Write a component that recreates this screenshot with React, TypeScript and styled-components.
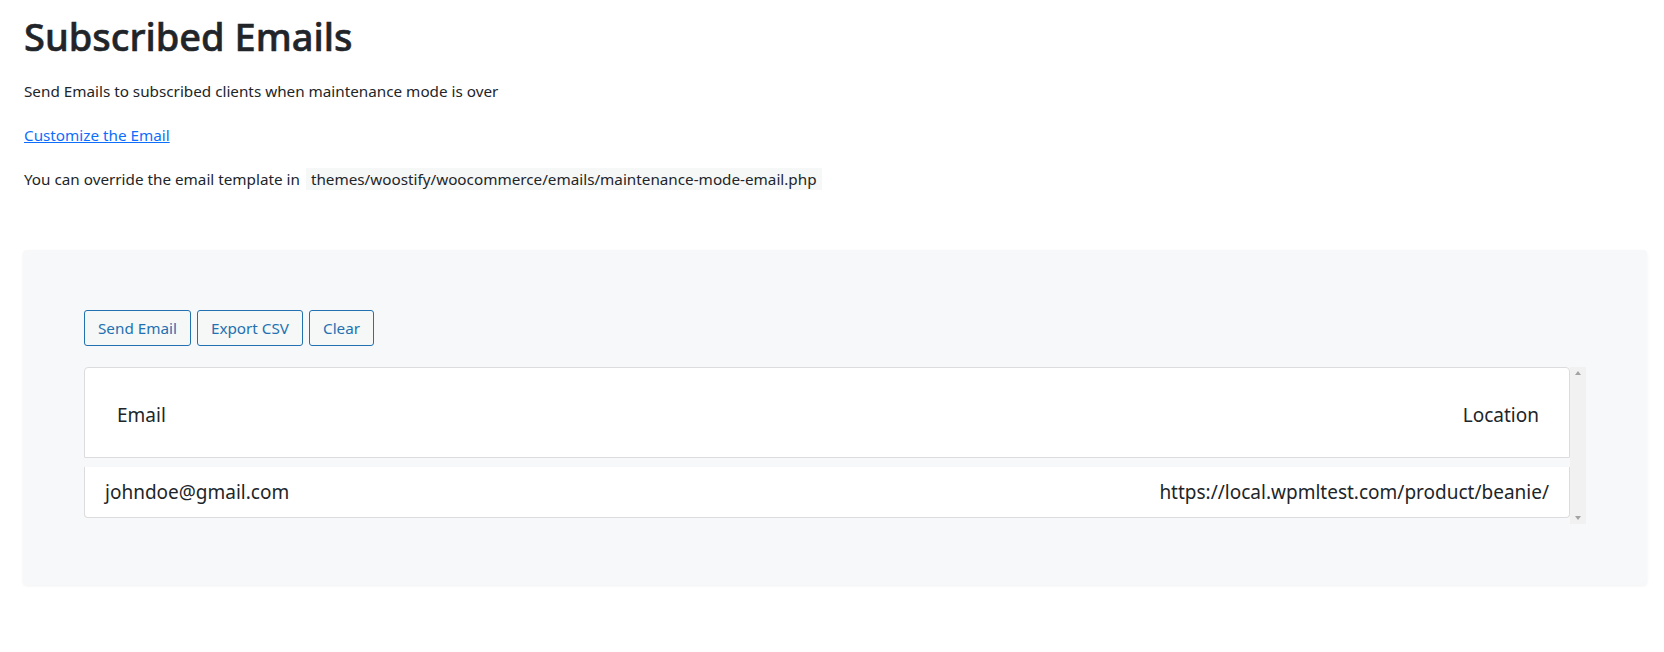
import styled, { createGlobalStyle } from "styled-components";

const GlobalStyle = createGlobalStyle`
  html, body {
    margin: 0;
    padding: 0;
    background: #ffffff;
  }
  body {
    font-family: "Noto Sans", "Open Sans", sans-serif;
    color: #212529;
  }
`;

const Page = styled.div`
  width: 1664px;
  padding: 12px 17px 40px 23px;
  box-sizing: border-box;
`;

const Title = styled.h1`
  margin: 0 0 19px 1px;
  font-size: 38px;
  font-weight: 500;
  line-height: 48px;
  color: #212529;
  -webkit-text-stroke: 0.6px #212529;
`;

const Text = styled.p`
  margin: 0 0 20px 1px;
  font-size: 15.25px;
  line-height: 24px;
  color: #212529;
`;

const Link = styled.a`
  color: #0d6efd;
  text-decoration: underline;
`;

const Code = styled.code`
  display: inline-block;
  margin-left: 6px;
  padding: 0 5px;
  background: #f6f7f7;
  font-family: inherit;
  font-size: 15.25px;
  line-height: 22px;
`;

const Panel = styled.section`
  margin-top: 59px;
  padding: 60px 61px 61px 61px;
  background: #f7f8fa;
  border-radius: 4px;
  box-shadow: 0 1px 3px rgba(0, 0, 0, 0.06);
`;

const Toolbar = styled.div`
  display: flex;
  gap: 6px;
  margin-bottom: 21px;
`;

const Button = styled.button`
  height: 36px;
  padding: 0 13px;
  background: #f6f7f7;
  border: 1px solid #2271b1;
  border-radius: 3px;
  color: #2271b1;
  font-family: inherit;
  font-size: 15.25px;
  cursor: pointer;
`;

const TableWrap = styled.div`
  display: flex;
  align-items: stretch;
`;

const TableArea = styled.div`
  flex: 1;
  min-width: 0;
  padding-bottom: 6px;
`;

const Row = styled.div<{ $head?: boolean }>`
  display: flex;
  justify-content: space-between;
  align-items: center;
  box-sizing: border-box;
  background: #ffffff;
  border: 1px solid #dcdcde;
  font-size: 19px;
  color: #212529;
  height: ${(p) => (p.$head ? "91px" : "51px")};
  padding: ${(p) => (p.$head ? "4px 30px 0 32px" : "0 20px")};
  margin-top: ${(p) => (p.$head ? "0" : "9px")};
  border-radius: ${(p) => (p.$head ? "4px 4px 0 0" : "0 0 4px 4px")};
  ${(p) => (p.$head ? "" : "border-top: none;")}
`;

const Scrollbar = styled.div`
  width: 16px;
  display: flex;
  flex-direction: column;
  justify-content: space-between;
  align-items: center;
  background: #f1f1f1;
  padding: 4px 0;
  box-sizing: border-box;
`;

const Arrow = styled.span<{ $down?: boolean }>`
  width: 0;
  height: 0;
  border-left: 3.5px solid transparent;
  border-right: 3.5px solid transparent;
  ${(p) =>
    p.$down
      ? "border-top: 4px solid #a3a3a3;"
      : "border-bottom: 4px solid #a3a3a3;"}
`;

export default function App() {
  return (
    <>
      <GlobalStyle />
      <Page>
        <Title>Subscribed Emails</Title>
        <Text>Send Emails to subscribed clients when maintenance mode is over</Text>
        <Text>
          <Link href="#">Customize the Email</Link>
        </Text>
        <Text>
          You can override the email template in
          <Code>themes/woostify/woocommerce/emails/maintenance-mode-email.php</Code>
        </Text>
        <Panel>
          <Toolbar>
            <Button>Send Email</Button>
            <Button>Export CSV</Button>
            <Button>Clear</Button>
          </Toolbar>
          <TableWrap>
            <TableArea>
              <Row $head>
                <span>Email</span>
                <span>Location</span>
              </Row>
              <Row>
                <span>johndoe@gmail.com</span>
                <span>https://local.wpmltest.com/product/beanie/</span>
              </Row>
            </TableArea>
            <Scrollbar>
              <Arrow />
              <Arrow $down />
            </Scrollbar>
          </TableWrap>
        </Panel>
      </Page>
    </>
  );
}
